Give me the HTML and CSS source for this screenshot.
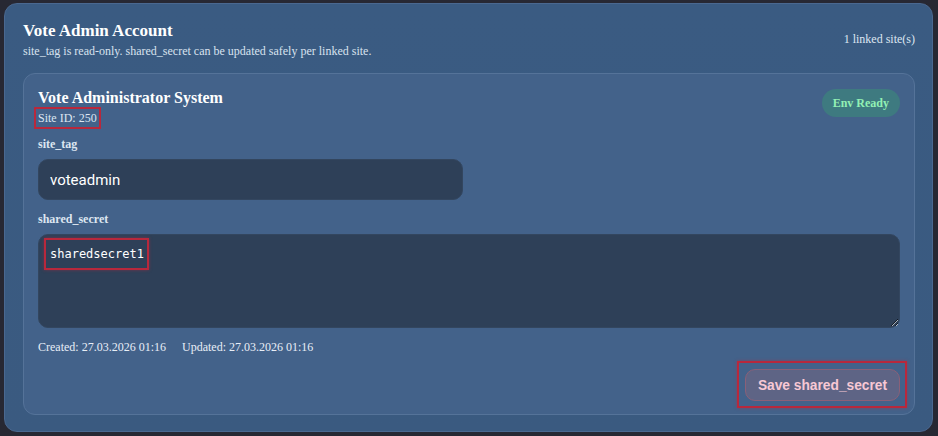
FILE: index.html
```html
<!DOCTYPE html>
<html lang="en">
<head>
  <meta charset="UTF-8" />
  <title>Vote Admin Account</title>
  <link rel="stylesheet" href="styles.css">
</head>
<body>
  <div class="account">
    <div class="account-head">
      <div>
        <h2>Vote Admin Account</h2>
        <p class="sub">site_tag is read-only. shared_secret can be updated safely per linked site.</p>
      </div>
      <span class="count">1 linked site(s)</span>
    </div>

    <div class="site">
      <div class="site-head">
        <div>
          <h3>Vote Administrator System</h3>
          <span class="site-id">Site ID: 250</span>
        </div>
        <span class="badge">Env Ready</span>
      </div>

      <label for="siteTag" class="first">site_tag</label>
      <input type="text" id="siteTag" value="voteadmin" readonly />

      <label for="sharedSecret">shared_secret</label>
      <div class="secret-wrap">
        <textarea id="sharedSecret">sharedsecret1</textarea>
        <div class="secret-mark"></div>
      </div>

      <div class="dates">
        <span>Created: 27.03.2026 01:16</span>
        <span>Updated: 27.03.2026 01:16</span>
      </div>

      <div class="actions">
        <div class="save-wrap">
          <button id="saveBtn">Save shared_secret</button>
        </div>
      </div>
    </div>
  </div>
</body>
</html>
```

FILE: styles.css
```css
* { box-sizing: border-box; }

body {
  margin: 0;
  padding: 3px 5px 4px 4px;
  background: #272833;
  font-family: "Liberation Serif", "Times New Roman", serif;
  color: #e8eef7;
}

.account {
  background: linear-gradient(180deg, #3a5b82 0%, #3a5a80 100%);
  border: 1px solid #4a6890;
  border-radius: 13px;
  padding: 17px 17px 16px 18px;
  height: 429px;
}

.account-head {
  display: flex;
  justify-content: space-between;
  align-items: center;
  margin-bottom: 15px;
}

h2 {
  margin: 0;
  font-size: 17px;
  line-height: 20px;
  font-weight: bold;
  color: #ffffff;
}

.sub {
  margin: 3px 0 0;
  font-size: 12px;
  line-height: 14px;
  color: #d8e2ef;
}

.count {
  font-size: 12px;
  color: #dde6f1;
}

.site {
  background: #43628a;
  border: 1px solid #557399;
  border-radius: 12px;
  padding: 14px 14px 13px 14px;
}

.site-head {
  display: flex;
  justify-content: space-between;
  align-items: flex-start;
}

h3 {
  margin: 0;
  font-size: 16px;
  line-height: 20px;
  font-weight: bold;
  color: #ffffff;
}

.site-id {
  display: inline-block;
  margin-top: 1px;
  font-size: 12px;
  line-height: 14px;
  color: #dde6f1;
  outline: 2px solid #b8283c;
  outline-offset: 2px;
}

.badge {
  margin-top: 1px;
  background: #3e7a80;
  color: #92f0b4;
  font-weight: bold;
  font-size: 12px;
  line-height: 28px;
  padding: 0 11px;
  border-radius: 14px;
}

label {
  display: block;
  margin: 12px 0 8px;
  font-size: 12px;
  line-height: 14px;
  font-weight: bold;
  color: #dde6f1;
}

label.first {
  margin-top: 11px;
}

input, textarea {
  display: block;
  background: #2e4058;
  border: 1px solid #33465f;
  border-radius: 10px;
  color: #ffffff;
}

input {
  width: 425px;
  height: 41px;
  padding: 0 11px;
  font-family: Roboto, Arial, sans-serif;
  font-size: 15px;
  outline: none;
}

.secret-wrap {
  position: relative;
}

textarea {
  width: 100%;
  height: 94px;
  padding: 11px 11px;
  font-family: "DejaVu Sans Mono", monospace;
  font-size: 12px;
  line-height: 17px;
  resize: vertical;
}

.secret-mark {
  position: absolute;
  left: 6px;
  top: 4px;
  width: 105px;
  height: 32px;
  border: 2px solid #b8283c;
  box-shadow: 0 0 3px rgba(190, 40, 60, 0.5);
}

.dates {
  display: flex;
  gap: 16px;
  margin-top: 12px;
  font-size: 12px;
  line-height: 14px;
  color: #e8eef7;
}

.actions {
  display: flex;
  justify-content: flex-end;
  margin-top: 15px;
}

.save-wrap {
  position: relative;
}

.save-wrap::after {
  content: "";
  position: absolute;
  inset: -8px -7px -7px -8px;
  border: 2px solid #b8283c;
  box-shadow: 0 0 3px rgba(190, 40, 60, 0.5);
  pointer-events: none;
}

#saveBtn {
  display: block;
  width: 155px;
  height: 32px;
  background: #5e6485;
  border: 1px solid #8a6078;
  border-radius: 10px;
  color: #f7c8d4;
  font-family: "Liberation Sans", Arial, sans-serif;
  font-weight: bold;
  font-size: 13.75px;
  cursor: pointer;
}
```
